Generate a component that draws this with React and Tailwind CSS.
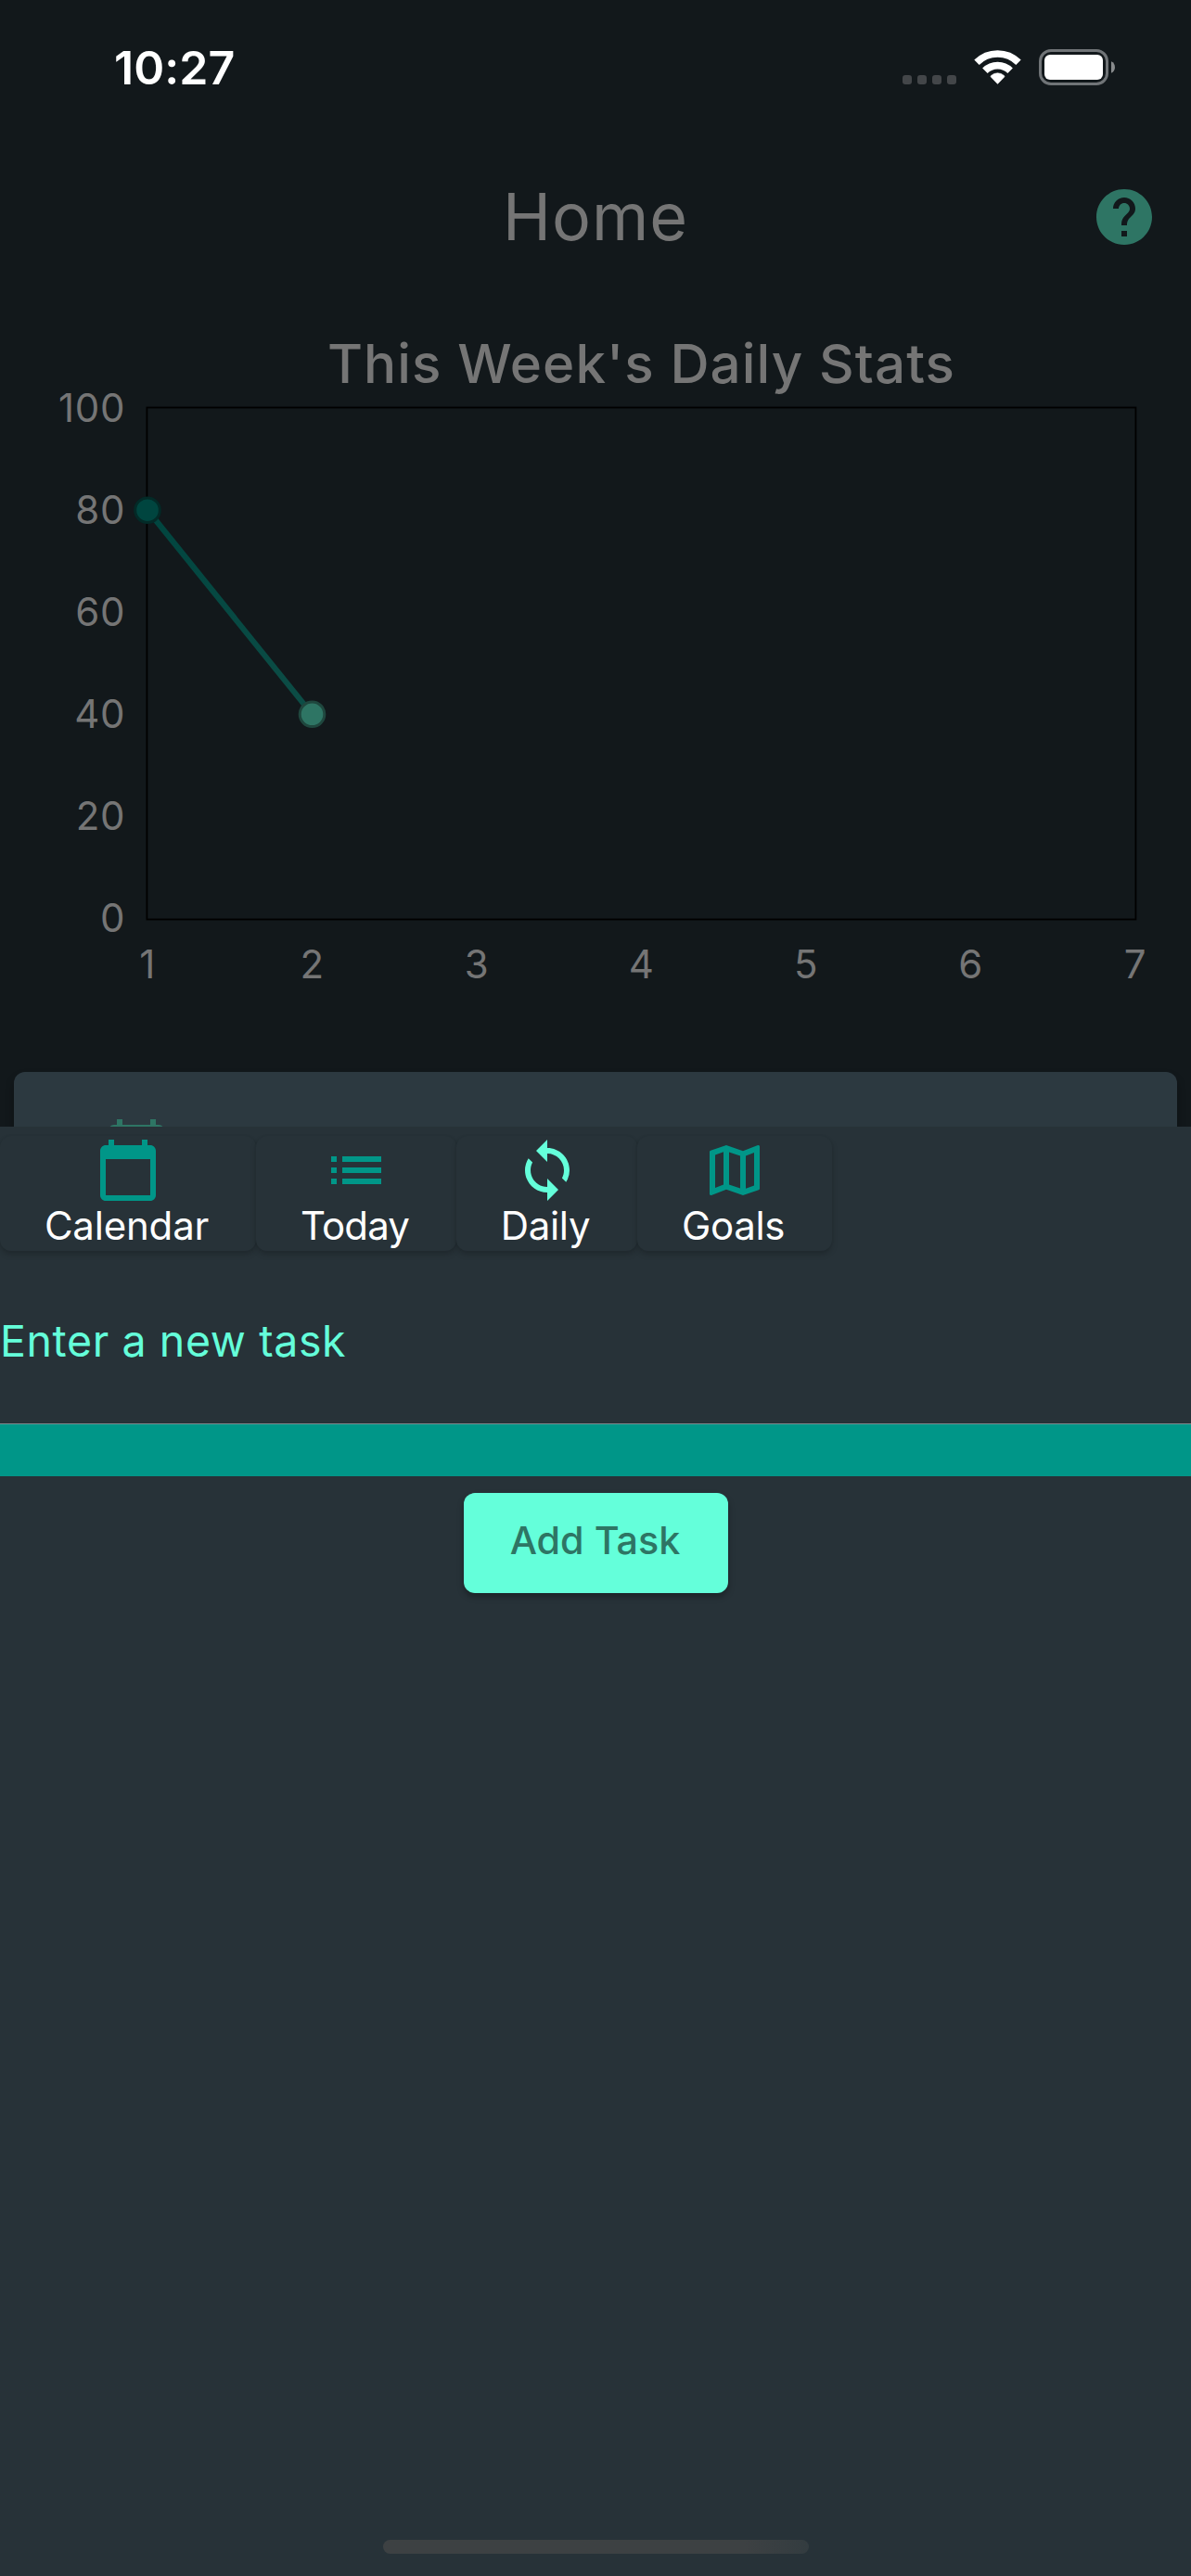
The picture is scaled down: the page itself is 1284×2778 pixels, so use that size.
import React from "react";
import { MdCalendarToday, MdList, MdSync, MdOutlineMap, MdHelp } from "react-icons/md";

const yLabels = ["100", "80", "60", "40", "20", "0"];
const xLabels = ["1", "2", "3", "4", "5", "6", "7"];

const tabs = [
  { label: "Calendar", Icon: MdCalendarToday, box: "w-[276px]", color: "text-[#009688]", text: "tracking-[-0.2px]" },
  { label: "Today", Icon: MdList, box: "w-[216px]", color: "text-[#009688]", text: "tracking-[-0.85px]" },
  { label: "Daily", Icon: MdSync, box: "w-[195px]", color: "text-[#64ffda]", text: "tracking-[-0.35px]" },
  { label: "Goals", Icon: MdOutlineMap, box: "w-[210px]", color: "text-[#009688]", text: "tracking-[-0.4px]" },
];

function StatusBar() {
  return (
    <div className="flex h-[150px] shrink-0 items-start pt-[53px] pl-[123px] text-white">
      <div className="h-[39px] w-[850px] text-[50px] leading-[40px] font-semibold tracking-[0.1px]">10:27</div>
      <div className="flex gap-[6px] pt-[28px]">
        <i className="size-[10px] rounded-[3px] bg-[#434649]" />
        <i className="size-[10px] rounded-[3px] bg-[#434649]" />
        <i className="size-[10px] rounded-[3px] bg-[#434649]" />
        <i className="size-[10px] rounded-[3px] bg-[#434649]" />
      </div>
      <svg className="ml-[19px] h-[39px] w-[51px]" viewBox="0 0 51 39" fill="none" stroke="currentColor">
        <path d="M3 14.3a31.8 31.8 0 0 1 45 0" strokeWidth="7.6" />
        <path d="M11.9 23.2a19.2 19.2 0 0 1 27.2 0" strokeWidth="7.8" />
        <path d="M25.5 37.4l-7-7.2a1.2 1.2 0 0 1 .1-1.8a10.5 10.5 0 0 1 13.8 0a1.2 1.2 0 0 1 .1 1.8z" fill="currentColor" strokeWidth="0.6" />
      </svg>
      <div className="ml-[19px] flex h-[39px] w-[75px] rounded-[13px] border-[3px] border-[#707477] p-[3px]">
        <div className="flex-1 rounded-[6px] bg-white" />
      </div>
      <svg className="ml-[3px] h-[39px] w-[4px]" viewBox="0 0 4 39">
        <path d="M0 13.3c5.3 2 5.3 10.4 0 12.4z" fill="#888b8d" />
      </svg>
    </div>
  );
}

function Chart() {
  return (
    <div className="flex flex-col">
      <h2 className="mt-[36px] mb-[8px] pr-[59px] pl-[158px] text-center text-[58.3px] leading-[77px] font-medium tracking-[1.09px] whitespace-nowrap">
        This Week's Daily Stats
      </h2>
      <div className="flex h-[553px]">
        <div className="flex h-[551px] w-[158px] shrink-0 flex-col justify-between pr-[23px] text-right text-[42px] tracking-[0.6px]">
          {yLabels.map((y) => (
            <div key={y} className="flex h-0 items-center justify-end">{y}</div>
          ))}
        </div>
        <svg className="h-[553px] w-[1067px] shrink-0 overflow-visible" viewBox="0 0 1067 553">
          <defs>
            <linearGradient id="trend" x1="0" y1="0" x2="1" y2="1">
              <stop offset="0" stopColor="#00453f" />
              <stop offset="1" stopColor="#0d4d46" />
            </linearGradient>
          </defs>
          <rect x="0.4" y="0.5" width="1066" height="552" fill="none" stroke="#000000" strokeWidth="1.8" />
          <path d="M1 111L178.5 331.3" stroke="url(#trend)" strokeWidth="6" />
          <circle cx="1" cy="111.2" r="13.3" fill="#00453f" stroke="#032a27" strokeWidth="3" />
          <circle cx="178.5" cy="331.3" r="13.3" fill="#2e7564" stroke="#1f473e" strokeWidth="3" />
        </svg>
      </div>
      <div className="flex h-[94px] w-[1243px] pl-[70px] text-center text-[42px] leading-[95px]">
        {xLabels.map((x) => (
          <div key={x} className="w-[177.5px] shrink-0">{x}</div>
        ))}
      </div>
    </div>
  );
}

function HomeScreen() {
  return (
    <div className="flex h-[1215px] shrink-0 flex-col overflow-hidden bg-[#12181b] text-[#757575]">
      <StatusBar />
      <header className="flex h-[168px] shrink-0 items-center justify-between pr-[36px] pl-[108px]">
        <h1 className="flex-1 text-center text-[70px] leading-[168px] tracking-[1px]">Home</h1>
        <MdHelp className="size-[72px] text-[#2e7564]" />
      </header>
      <Chart />
      <div className="mx-[15px] mt-[70px] h-[160px] shrink-0 rounded-[12px] bg-[#2c3940] pt-[48px] pl-[96px] shadow-[0_6px_10px_rgba(0,0,0,0.3)]">
        <MdCalendarToday className="size-[72px] text-[#2e7564]" />
      </div>
    </div>
  );
}

function TaskSheet() {
  return (
    <div className="flex flex-1 flex-col bg-[#273238]">
      <nav className="flex pt-[10px]">
        {tabs.map(({ label, Icon, box, color, text }) => (
          <button
            key={label}
            className={`flex h-[124px] flex-col items-center rounded-[12px] bg-[#273238] pt-px shadow-[0_4px_6px_rgba(0,0,0,0.18),0_0_3px_rgba(0,0,0,0.04)] ${box}`}
          >
            <Icon className={`size-[72px] shrink-0 ${color}`} />
            <span className={`pr-[3px] text-[42px] leading-[48px] text-white ${text}`}>{label}</span>
          </button>
        ))}
      </nav>
      <div className="flex h-[187px] items-center border-b border-[#7c8b8f] text-[46.5px] tracking-[0.6px] text-[#64ffda]">
        <span className="pt-[10px]">Enter a new task</span>
      </div>
      <div className="h-[56px] bg-[#009688]" />
      <button className="mt-[18px] h-[108px] w-[285px] self-center rounded-[12px] bg-[#64ffda] pr-[1px] pb-[5px] text-[41.3px] font-medium text-[#2e7564] shadow-[0_4px_7px_rgba(0,0,0,0.3)]">
        Add Task
      </button>
      <div className="mt-auto mb-[24px] h-[15px] w-[459px] self-center rounded-full bg-linear-to-r from-[#3d4143] from-85% to-[#333c40]" />
    </div>
  );
}

export default function App() {
  return (
    <main className="flex h-[2778px] w-[1284px] flex-col overflow-hidden font-['Inter',sans-serif]">
      <HomeScreen />
      <TaskSheet />
    </main>
  );
}
